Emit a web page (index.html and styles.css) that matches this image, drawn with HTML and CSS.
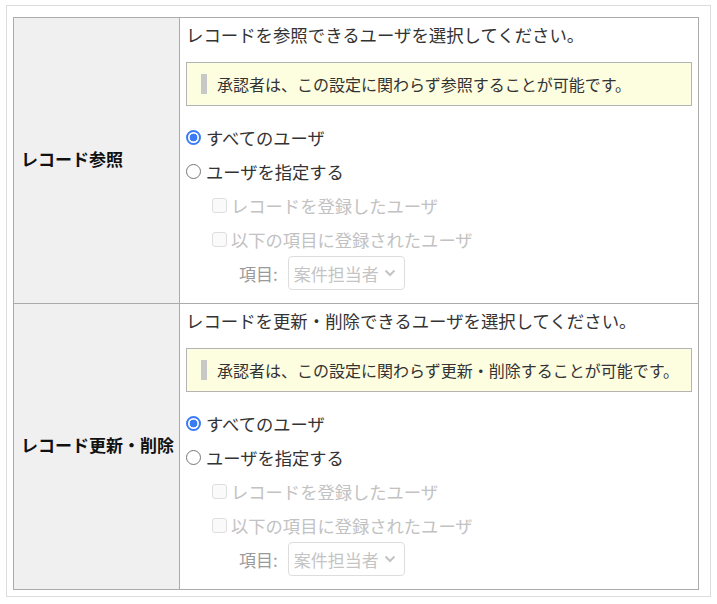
FILE: index.html
```html
<!DOCTYPE html>
<html lang="ja">
<head>
<meta charset="utf-8">
<link rel="stylesheet" href="styles.css">
</head>
<body>
<div class="frame">
  <table class="perm">
    <tr>
      <th class="label">レコード参照</th>
      <td class="content">
        <p class="lead">レコードを参照できるユーザを選択してください。</p>
        <div class="note"><span class="bar"></span>承認者は、この設定に関わらず参照することが可能です。</div>
        <div class="opts">
          <div class="line"><span class="radio on"></span>すべてのユーザ</div>
          <div class="line"><span class="radio"></span>ユーザを指定する</div>
          <div class="line sub dis"><span class="check"></span>レコードを登録したユーザ</div>
          <div class="line sub dis"><span class="check"></span>以下の項目に登録されたユーザ</div>
          <div class="line field"><span class="flabel">項目:</span><span class="select">案件担当者<svg class="chev" width="12" height="8" viewBox="0 0 12 8"><path d="M1.5 1.5 L6 6 L10.5 1.5" fill="none" stroke="#c4c4c4" stroke-width="2"/></svg></span></div>
        </div>
      </td>
    </tr>
    <tr>
      <th class="label">レコード更新・削除</th>
      <td class="content">
        <p class="lead">レコードを更新・削除できるユーザを選択してください。</p>
        <div class="note"><span class="bar"></span>承認者は、この設定に関わらず更新・削除することが可能です。</div>
        <div class="opts">
          <div class="line"><span class="radio on"></span>すべてのユーザ</div>
          <div class="line"><span class="radio"></span>ユーザを指定する</div>
          <div class="line sub dis"><span class="check"></span>レコードを登録したユーザ</div>
          <div class="line sub dis"><span class="check"></span>以下の項目に登録されたユーザ</div>
          <div class="line field"><span class="flabel">項目:</span><span class="select">案件担当者<svg class="chev" width="12" height="8" viewBox="0 0 12 8"><path d="M1.5 1.5 L6 6 L10.5 1.5" fill="none" stroke="#c4c4c4" stroke-width="2"/></svg></span></div>
        </div>
      </td>
    </tr>
  </table>
</div>
</body>
</html>
```

FILE: styles.css
```css
html, body {
  margin: 0;
  padding: 0;
  background: #ffffff;
}
body {
  font-family: "Noto Sans CJK JP", "Noto Sans", sans-serif;
  color: #333333;
}
.frame {
  box-sizing: border-box;
  width: 705px;
  height: 592px;
  margin: 5px 0 0 6px;
  border: 1px solid #dcdcdc;
  padding: 11px 0 0 6px;
}
.perm {
  border-collapse: collapse;
  width: 686px;
}
.perm th, .perm td {
  border: 1px solid #ababab;
  padding: 0;
}
.label {
  width: 166px;
  box-sizing: border-box;
  background: #f0f0f0;
  text-align: left;
  vertical-align: middle;
  padding: 0 0 4px 7px !important;
  font-size: 17px;
  font-weight: bold;
  color: #111111;
  white-space: nowrap;
}
.content {
  vertical-align: top;
  padding: 5px 6px 13px 6px !important;
}
.lead {
  margin: 0;
  font-size: 17.4px;
  line-height: 24px;
  height: 24px;
}
.note {
  margin-top: 15px;
  box-sizing: border-box;
  height: 44px;
  border: 1px solid #b4b4b4;
  background: #fdfde0;
  display: flex;
  align-items: center;
  padding-left: 14px;
  font-size: 16px;
  color: #333333;
}
.bar {
  width: 6px;
  height: 20px;
  background: #c8c8c8;
  margin-right: 10px;
}
.opts {
  margin-top: 14px;
  display: flex;
  flex-direction: column;
}
.line {
  height: 34px;
  display: flex;
  align-items: center;
  font-size: 17.3px;
}
.radio {
  box-sizing: border-box;
  width: 15px;
  height: 15px;
  border-radius: 50%;
  border: 1px solid #767676;
  margin-right: 5px;
  background: #fff;
}
.radio.on {
  border: 2px solid #3b7cf5;
  background: radial-gradient(circle, #3b7cf5 0 3.6px, #ffffff 4.2px);
}
.sub {
  padding-left: 26px;
}
.dis {
  color: #c2c2c2;
}
.check {
  box-sizing: border-box;
  width: 15px;
  height: 15px;
  border: 1px solid #dedede;
  border-radius: 3px;
  background: #fafafa;
  margin-right: 4px;
}
.field {
  padding-left: 53px;
}
.flabel {
  color: #9a9a9a;
  font-size: 17px;
  margin-right: 10px;
}
.select {
  box-sizing: border-box;
  width: 117px;
  height: 34px;
  border: 1px solid #dddddd;
  border-radius: 4px;
  display: flex;
  align-items: center;
  padding-left: 5px;
  font-size: 17px;
  color: #c4c4c4;
}
.chev {
  margin-left: 5px;
}
```
